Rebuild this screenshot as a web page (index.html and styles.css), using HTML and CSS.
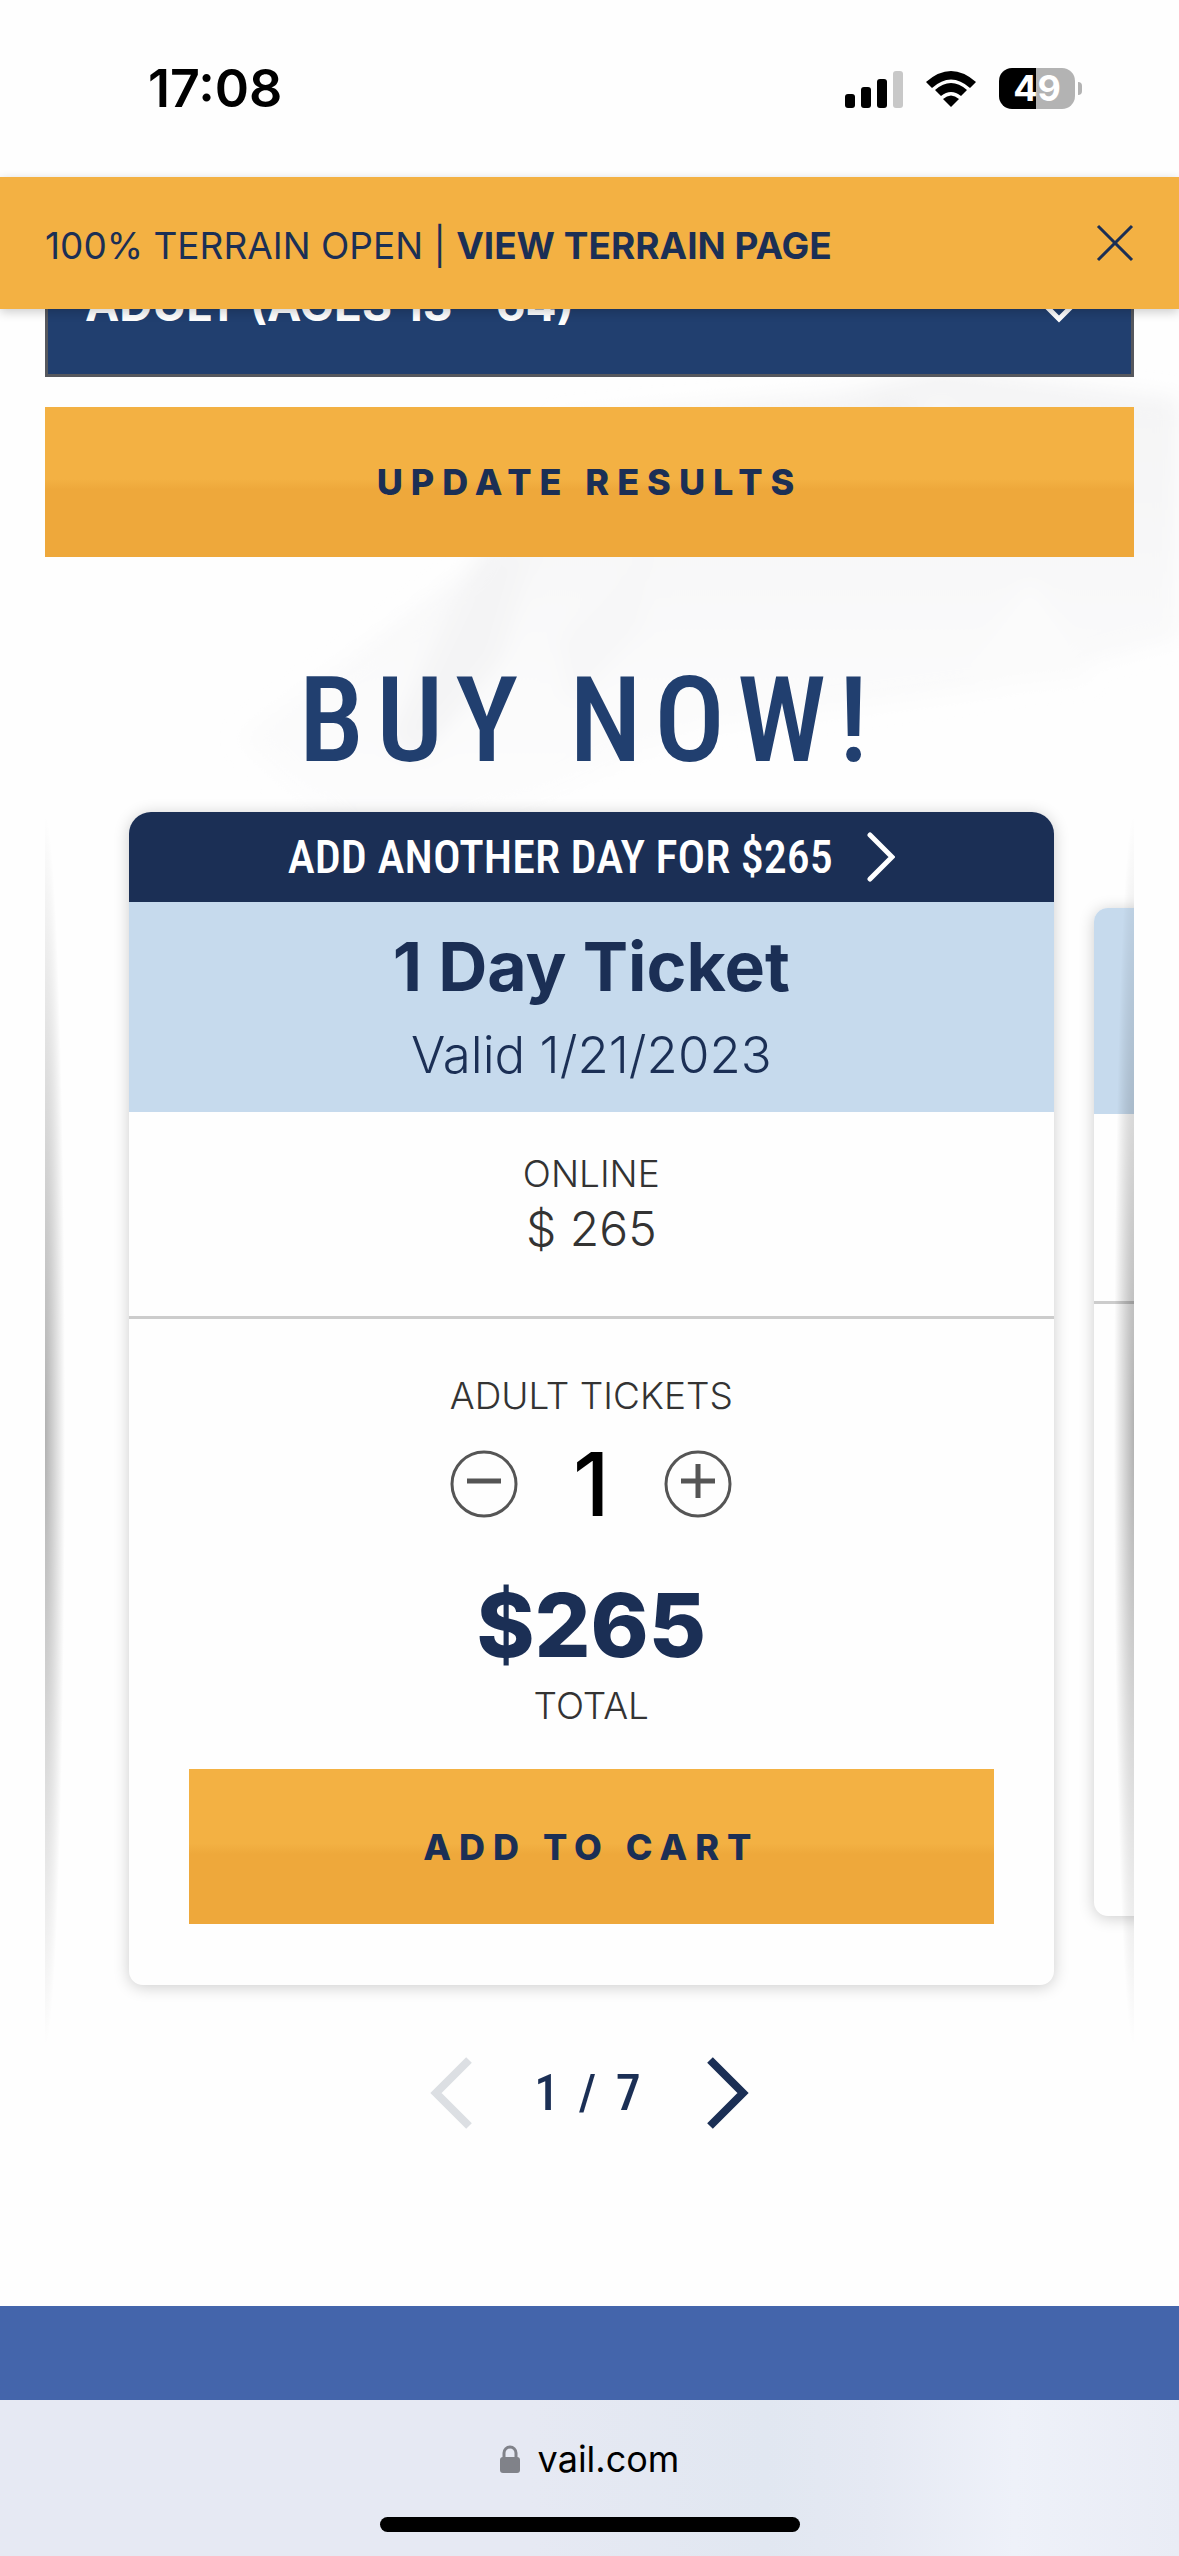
FILE: index.html
```
<!DOCTYPE html>
<html lang="en">

<head>
    <meta charset="UTF-8" />
    <meta name="viewport" content="width=device-width, initial-scale=1.0" />
    <title>Vail lift tickets</title>
    <link rel="stylesheet" href="styles.css">
</head>

<body>
    <div class="status">
        <span class="time">17:08</span>
        <div class="status-icons">
            <svg width="58" height="38" viewBox="0 0 58 38">
                <rect x="0" y="24" width="10" height="14" rx="3" />
                <rect x="16" y="17" width="10" height="21" rx="3" />
                <rect x="32" y="9" width="10" height="29" rx="3" />
                <rect x="48" y="1" width="10" height="37" rx="3" fill="#c8c8c8" />
            </svg>
            <svg width="52" height="38" viewBox="0 0 52 38">
                <path d="M1 12 Q26 -10 51 12 L45 18 Q26 1 7 18 Z" />
                <path d="M10 20 Q26 6 42 20 L36 26 Q26 18 16 26 Z" />
                <path d="M18 29 Q26 22 34 29 L26 37 Z" />
            </svg>
            <div class="battery"><span>49</span></div>
        </div>
    </div>

    <header class="banner">
        <p>100% TERRAIN OPEN | <a href="#">VIEW TERRAIN PAGE</a></p>
        <button class="close" aria-label="Close">
            <svg width="38" height="38" viewBox="0 0 38 38"><path d="M2 2 L36 36 M36 2 L2 36" /></svg>
        </button>
    </header>

    <main>
        <!-- faded mountain behind the form -->
        <svg class="mountain" viewBox="0 0 1179 620" preserveAspectRatio="none" aria-hidden="true">
            <defs>
                <linearGradient id="fade" x1="0" y1="0" x2="0" y2="1">
                    <stop offset="0" stop-color="#f4f4f5" />
                    <stop offset="1" stop-color="#fefefe" />
                </linearGradient>
                <filter id="soft"><feGaussianBlur stdDeviation="10" /></filter>
            </defs>
            <g filter="url(#soft)">
                <path d="M240 430 L470 260 L560 110 L840 85 L940 60 L1179 90 L1179 330 L1000 380 L700 420 L380 560 Z" fill="url(#fade)" />
                <path d="M390 430 L480 250 L530 240 L500 350 L420 450 Z" fill="#f4f4f5" />
                <path d="M560 330 L650 250 L640 320 L570 400 Z" fill="#f7f7f8" />
                <path d="M830 150 L890 90 L930 120 L900 200 Z" fill="#f0f0f1" />
                <path d="M940 90 L965 150 L920 150 Z" fill="#fff" />
                <path d="M1030 270 L1090 370 L960 380 Z" fill="#fbfbfb" />
            </g>
        </svg>

        <form class="filters">
            <div class="age">
                <select aria-label="Ticket age">
                    <option>ADULT (AGES 13 - 64)</option>
                </select>
                <svg width="36" height="22" viewBox="0 0 36 22"><path d="M3 3 L18 18 L33 3" /></svg>
            </div>
            <button type="button" class="btn update">UPDATE RESULTS</button>
        </form>

        <h1>BUY NOW!</h1>

        <div class="carousel">
            <section class="card">
                <button class="add-day">
                    ADD ANOTHER DAY FOR $265
                    <svg width="28" height="50" viewBox="0 0 28 50"><path d="M3 3 L25 25 L3 47" /></svg>
                </button>
                <div class="card-title">
                    <h2>1 Day Ticket</h2>
                    <p>Valid 1/21/2023</p>
                </div>
                <div class="online">
                    <p class="label">ONLINE</p>
                    <p class="price">$ 265</p>
                </div>
                <div class="tickets">
                    <p class="label">ADULT TICKETS</p>
                    <div class="counter">
                        <button aria-label="Remove ticket">
                            <svg width="68" height="68" viewBox="0 0 68 68"><circle cx="34" cy="34" r="32" /><path d="M17 31 H51" /></svg>
                        </button>
                        <output>1</output>
                        <button aria-label="Add ticket">
                            <svg width="68" height="68" viewBox="0 0 68 68"><circle cx="34" cy="34" r="32" /><path d="M17 31 H51 M34 14 V48" /></svg>
                        </button>
                    </div>
                    <p class="total">$265</p>
                    <p class="label">TOTAL</p>
                    <button class="btn cart">ADD TO CART</button>
                </div>
            </section>
            <section class="card next">
                <div class="card-title"></div>
                <div class="online"></div>
            </section>
        </div>

        <nav class="pager">
            <button aria-label="Previous" disabled>
                <svg width="44" height="74" viewBox="0 0 44 74"><path d="M39 4 L6 37 L39 70" /></svg>
            </button>
            <span>1 / 7</span>
            <button aria-label="Next">
                <svg width="44" height="74" viewBox="0 0 44 74"><path d="M5 4 L38 37 L5 70" /></svg>
            </button>
        </nav>
    </main>

    <footer></footer>

    <div class="browser">
        <div class="address">
            <svg width="20" height="28" viewBox="0 0 20 28">
                <path d="M4 13 V8 a6 6 0 0 1 12 0 V13" fill="none" stroke="#808289" stroke-width="3" />
                <rect x="0" y="12" width="20" height="16" rx="3" fill="#808289" />
            </svg>
            <a href="#">vail.com</a>
        </div>
        <div class="home"></div>
    </div>
</body>

</html>
```
FILE: styles.css
```
* {
    box-sizing: border-box;
    margin: 0;
    padding: 0;
}

body {
    min-height: 100vh;
    display: flex;
    flex-direction: column;
    background-color: #fefefe;
    color: #1b2f55;
    font-family: "Inter", "Noto Sans", sans-serif;
    font-size: 36px;
}

button {
    border: none;
    background: none;
    color: inherit;
    font-family: inherit;
    cursor: pointer;
}

svg {
    display: block;
}

a {
    color: inherit;
    text-decoration: none;
}

/* status bar */
.status {
    height: 177px;
    padding: 0 96px 0 148px;
    display: flex;
    justify-content: space-between;
    align-items: center;
    color: black;
}

.time {
    font-size: 52px;
    font-weight: 600;
}

.status-icons {
    display: flex;
    align-items: center;
    gap: 22px;
}

.battery {
    position: relative;
    width: 76px;
    height: 41px;
    margin-right: 8px;
    border-radius: 13px;
    background: linear-gradient(90deg, black 49%, #b3b3b3 49%);
    color: white;
    font-size: 36px;
    font-weight: 700;
    line-height: 41px;
    text-align: center;
}

.battery::after {
    content: "";
    position: absolute;
    right: -7px;
    top: 14px;
    width: 4px;
    height: 13px;
    border-radius: 0 4px 4px 0;
    background-color: #b3b3b3;
}

/* yellow banner */
.banner {
    position: relative;
    z-index: 2;
    height: 132px;
    padding: 0 45px;
    display: flex;
    justify-content: space-between;
    align-items: center;
    background-color: #f3b143;
    box-shadow: 0 3px 10px rgba(0, 0, 0, 0.2);
    font-size: 37px;
}

.banner p {
    padding-top: 4px;
}

.banner a {
    font-weight: 700;
}

.close path {
    fill: none;
    stroke: #1b2f55;
    stroke-width: 3;
}

main {
    position: relative;
    flex-grow: 1;
    margin-top: -78px;
    padding: 0 45px;
}

.mountain {
    position: absolute;
    top: 77px;
    left: 0;
    width: 100%;
    height: 620px;
}

.filters {
    position: relative;
    display: flex;
    flex-direction: column;
    gap: 30px;
}

.age select {
    display: block;
    width: 100%;
    height: 146px;
    padding: 0 37px;
    appearance: none;
    border: 3px solid #56585e;
    border-radius: 0;
    background-color: #213f6f;
    color: white;
    font-family: inherit;
    font-size: 46px;
    font-weight: 700;
}

.age svg {
    position: absolute;
    top: 70px;
    right: 57px;
    fill: none;
    stroke: white;
    stroke-width: 5;
}

.btn {
    display: block;
    width: 100%;
    height: 150px;
    background: linear-gradient(#f3b143 48%, #eea83b 55%);
    font-size: 36px;
    font-weight: 800;
    letter-spacing: 8px;
}

h1 {
    position: relative;
    margin-top: 96px;
    color: #213f6f;
    font-family: "Liberation Sans Narrow", "Roboto Condensed", "Liberation Sans", sans-serif;
    font-size: 118px;
    font-weight: 500;
    letter-spacing: 12px;
    line-height: 136px;
    text-align: center;
}

/* ticket cards */
.carousel {
    position: relative;
    display: flex;
    gap: 40px;
    padding: 23px 0 62px 84px;
    overflow: hidden;
}

.carousel::before,
.carousel::after {
    content: "";
    position: absolute;
    top: 25px;
    bottom: 0;
    width: 20px;
}

.carousel::before {
    left: 0;
    background: radial-gradient(farthest-side at 0 50%, rgba(0, 0, 0, 0.3), transparent);
}

.carousel::after {
    right: 0;
    background: radial-gradient(farthest-side at 100% 50%, rgba(0, 0, 0, 0.3), transparent);
}

.card {
    flex: 0 0 92%;
    overflow: hidden;
    border-radius: 22px 22px 14px 14px;
    background-color: #fefefe;
    box-shadow: 0 2px 16px rgba(0, 0, 0, 0.2);
    text-align: center;
}

.add-day {
    width: 100%;
    height: 90px;
    display: flex;
    justify-content: center;
    align-items: center;
    gap: 34px;
    background-color: #1b2f55;
    color: white;
    font-family: "Liberation Sans Narrow", "Roboto Condensed", "Liberation Sans", sans-serif;
    font-size: 46px;
    font-weight: 500;
}

.add-day path {
    fill: none;
    stroke: white;
    stroke-width: 5;
    stroke-linecap: round;
}

.card-title {
    height: 210px;
    padding-top: 20px;
    background-color: #c6daed;
}

.card-title h2 {
    font-size: 68px;
    font-weight: 700;
    line-height: 88px;
}

.card-title p {
    font-size: 51px;
    font-weight: 300;
    line-height: 90px;
}

.online {
    height: 207px;
    padding-top: 37px;
    border-bottom: 3px solid #ccc;
    color: #333;
}

.label {
    color: #333;
    font-size: 37px;
    font-weight: 300;
    line-height: 50px;
}

.price {
    font-size: 48px;
    font-weight: 300;
    line-height: 60px;
}

.tickets {
    padding: 52px 60px 61px;
}

.counter {
    display: flex;
    justify-content: center;
    align-items: center;
    gap: 40px;
    height: 126px;
}

.counter svg {
    fill: none;
    stroke: #555;
    stroke-width: 3;
}

.counter path {
    stroke-width: 5;
}

.counter output {
    width: 66px;
    color: black;
    font-size: 88px;
    font-weight: 500;
    line-height: 100px;
}

.total {
    font-size: 88px;
    font-weight: 800;
    line-height: 112px;
    margin-top: 22px;
}

.cart {
    height: 155px;
    margin-top: 38px;
}

.next {
    align-self: flex-start;
    height: 1008px;
    margin-top: 96px;
    border-radius: 14px;
}

.next .card-title {
    height: 206px;
}

.next .online {
    height: 190px;
}

.pager {
    display: flex;
    justify-content: center;
    align-items: center;
    gap: 60px;
    margin-top: 9px;
    font-family: "Liberation Sans Narrow", "Roboto Condensed", "Liberation Sans", sans-serif;
    font-size: 50px;
    font-weight: 500;
    letter-spacing: 4px;
}

.pager path {
    fill: none;
    stroke: #1b2f55;
    stroke-width: 8;
}

.pager button:disabled path {
    stroke: #dcdfe3;
}

footer {
    height: 94px;
    background-color: #4465ab;
}

/* browser bar */
.browser {
    height: 156px;
    padding: 32px 0 24px;
    display: flex;
    flex-direction: column;
    justify-content: space-between;
    align-items: center;
    background: linear-gradient(90deg, #e6e9f3, #e6e9f3 45%, #e1e7f1 65%, #e5e9f3 74%, #eef1f9 86%, #e9ecf5);
    color: black;
}

.address {
    display: flex;
    align-items: center;
    gap: 18px;
    line-height: 54px;
}

.home {
    width: 420px;
    height: 15px;
    border-radius: 8px;
    background-color: black;
}
```
